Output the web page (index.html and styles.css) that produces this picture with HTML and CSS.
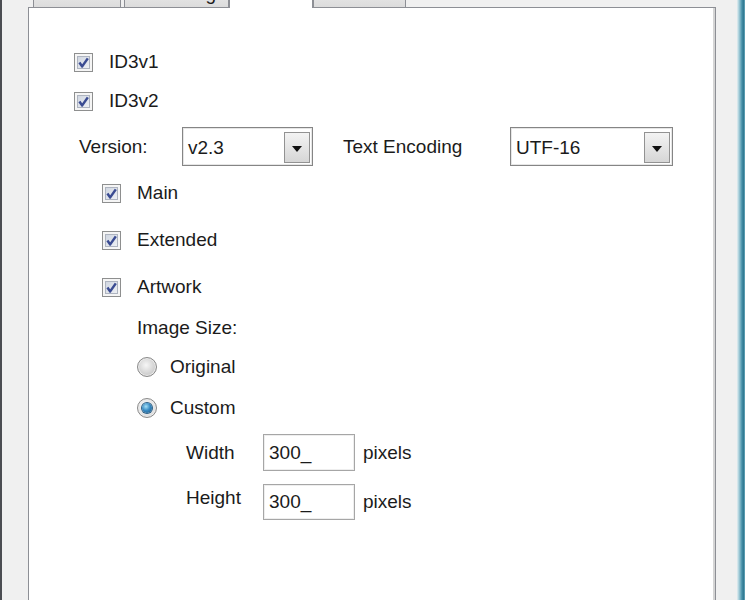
FILE: index.html
```html
<!DOCTYPE html>
<html>
<head>
    <meta charset="utf-8">
    <title>Tag Options</title>
    <link rel="stylesheet" href="styles.css">
</head>
<body>
    <div class="window">
        <div class="frame-left"></div>

        <div class="client">
            <div class="tabs">
                <div class="tab tab-general">General</div>
                <div class="tab tab-encoding">Encoding</div>
                <div class="tab tab-meta selected">Metadata</div>
                <div class="tab tab-other">Other</div>
            </div>

            <div class="panel">
                <label class="row first">
                    <span class="check"><svg viewBox="0 0 13 13"><path d="M2.4 6.6 L5.2 10.4 L10.8 2.4"/></svg></span>
                    <span class="text">ID3v1</span>
                </label>
                <label class="row gap-1">
                    <span class="check"><svg viewBox="0 0 13 13"><path d="M2.4 6.6 L5.2 10.4 L10.8 2.4"/></svg></span>
                    <span class="text">ID3v2</span>
                </label>

                <div class="row combo-row gap-7">
                    <span class="label version-label">Version:</span>
                    <div class="combo version">
                        <span class="value">v2.3</span>
                        <span class="drop"></span>
                    </div>
                    <span class="label encoding-label">Text Encoding</span>
                    <div class="combo encoding">
                        <span class="value">UTF-16</span>
                        <span class="drop"></span>
                    </div>
                </div>

                <div class="frames">
                    <label class="row gap-8">
                        <span class="check"><svg viewBox="0 0 13 13"><path d="M2.4 6.6 L5.2 10.4 L10.8 2.4"/></svg></span>
                        <span class="text">Main</span>
                    </label>
                    <label class="row gap-9">
                        <span class="check"><svg viewBox="0 0 13 13"><path d="M2.4 6.6 L5.2 10.4 L10.8 2.4"/></svg></span>
                        <span class="text">Extended</span>
                    </label>
                    <label class="row gap-9">
                        <span class="check"><svg viewBox="0 0 13 13"><path d="M2.4 6.6 L5.2 10.4 L10.8 2.4"/></svg></span>
                        <span class="text">Artwork</span>
                    </label>
                </div>

                <div class="artwork">
                    <div class="row caption gap-10">Image Size:</div>
                    <label class="row gap-8">
                        <span class="radio"></span>
                        <span class="radio-text">Original</span>
                    </label>
                    <label class="row gap-3">
                        <span class="radio on"></span>
                        <span class="radio-text">Custom</span>
                    </label>

                    <div class="dims">
                        <div class="row dim gap-7">
                            <span class="dim-label">Width</span>
                            <span class="field">300_</span>
                            <span class="unit">pixels</span>
                        </div>
                        <div class="row dim dim-height gap-13">
                            <span class="dim-label">Height</span>
                            <span class="field">300_</span>
                            <span class="unit">pixels</span>
                        </div>
                    </div>
                </div>
            </div>
        </div>

        <div class="frame-right"></div>
    </div>
</body>
</html>
```

FILE: styles.css
```css
html, body {
    margin: 0;
    padding: 0;
    overflow: hidden;
}

body {
    font-family: "Liberation Sans", Arial, sans-serif;
    font-size: 19px;
    color: #1b1b1b;
    background: #f0f0f0;
}

.window {
    display: flex;
    height: 600px;
}

.frame-left {
    width: 2px;
    background: #4b4d52;
}

.frame-right {
    width: 8px;
    background: linear-gradient(to right, #e4eef1 0, #a5cdd9 25%, #4a93ab 60%, #2f7891 80%, #6aaabd 100%);
}

.client {
    flex: 1;
    display: flex;
    flex-direction: column;
    padding: 0 21px 0 26px;
}

/* tab strip; its labels sit above the visible top edge */
.tabs {
    display: flex;
    align-items: flex-end;
    height: 28px;
    margin-top: -21px;
    padding-left: 5px;
}

.tab {
    box-sizing: border-box;
    height: 28px;
    padding-top: 4px;
    line-height: 20px;
    text-align: center;
    border: 1px solid #8d8f95;
    border-bottom: none;
    background: linear-gradient(#f2f2f2, #dcdcdc);
}

.tab-general { width: 88px; margin-right: 3px; }
.tab-encoding { width: 105px; }
.tab-meta { width: 84px; }
.tab-other { width: 93px; }

.tab.selected {
    position: relative;
    z-index: 1;
    height: 31px;
    margin-bottom: -1px;
    background: #fff;
    border-color: #8d8f95;
}

.panel {
    flex: 1;
    background: #fff;
    border: 1px solid #8d8f95;
    border-bottom: none;
    box-shadow: inset -2px 0 0 #d5d5d5;
    padding: 35px 0 0 45px;
}

.row {
    display: flex;
    align-items: center;
    height: 38px;
}

.gap-1 { margin-top: 1px; }
.gap-3 { margin-top: 3px; }
.gap-7 { margin-top: 7px; }
.gap-8 { margin-top: 8px; }
.gap-9 { margin-top: 9px; }
.gap-10 { margin-top: 10px; }
.gap-13 { margin-top: 13px; }

/* checkbox */
.check {
    box-sizing: border-box;
    width: 19px;
    height: 19px;
    display: flex;
    align-items: center;
    justify-content: center;
    border: 1px solid #8e8f8f;
    background: linear-gradient(135deg, #c9d0dc, #f4f6f9);
    box-shadow: inset 0 0 0 2px #f5f5f5, inset 0 0 0 3px #aeb4c0;
    margin-right: 16px;
}

.check svg {
    width: 13px;
    height: 13px;
}

.check path {
    fill: none;
    stroke: #3a4b92;
    stroke-width: 2.5;
    stroke-linejoin: round;
}

/* version / encoding combos */
.combo-row {
    height: 39px;
    padding-left: 5px;
}

.label {
    flex: none;
}

.version-label { width: 103px; }
.encoding-label { width: 167px; margin-left: 30px; }

.combo {
    box-sizing: border-box;
    display: flex;
    align-items: center;
    height: 39px;
    padding: 4px 2px 2px 5px;
    border: 1px solid #858585;
    box-shadow: inset 0 0 0 1px #e6e6e6;
    background: #fff;
}

.combo.version { width: 131px; }
.combo.encoding { width: 163px; }

.combo .value {
    flex: 1;
}

.drop {
    box-sizing: border-box;
    width: 26px;
    height: 31px;
    display: flex;
    align-items: center;
    justify-content: center;
    border: 1px solid #929292;
    background: linear-gradient(#f3f3f3, #d6d6d6);
}

.drop::before {
    content: "";
    border-left: 5px solid transparent;
    border-right: 5px solid transparent;
    border-top: 6px solid #111;
    margin-top: 2px;
}

/* tag frames */
.frames {
    padding-left: 28px;
}

.artwork {
    padding-left: 63px;
}

.caption {
    height: 24px;
}

/* radio buttons */
.radio {
    box-sizing: border-box;
    width: 20px;
    height: 20px;
    display: flex;
    align-items: center;
    justify-content: center;
    border-radius: 50%;
    border: 1px solid #8a8a8a;
    background: radial-gradient(circle at 45% 40%, #f6f6f6 0, #d4d4d4 55%, #b9b9b9 100%);
    box-shadow: inset 0 0 0 1px #ececec;
    margin-right: 13px;
}

.radio.on {
    background: radial-gradient(circle at 45% 40%, #fdfdfd 0, #e2e2e2 60%, #c8c8c8 100%);
}

.radio.on::after {
    content: "";
    width: 10px;
    height: 10px;
    border-radius: 50%;
    background: radial-gradient(circle at 40% 35%, #a6e1f7 0, #3a8cc4 45%, #15507f 100%);
    box-shadow: 0 0 0 1px #2b5f86;
}

/* custom size fields */
.dims {
    padding-left: 49px;
}

.dim {
    height: 37px;
}

.dim-height {
    height: 36px;
}

.dim-label {
    width: 77px;
}

.dim-height .dim-label {
    margin-top: -8px;
}

.field {
    box-sizing: border-box;
    display: flex;
    align-items: center;
    width: 92px;
    height: 100%;
    padding-left: 5px;
    border: 1px solid #a6a6a6;
    box-shadow: inset 0 0 0 1px #eeeeee;
    background: #fff;
}

.unit {
    margin-left: 8px;
}
```
